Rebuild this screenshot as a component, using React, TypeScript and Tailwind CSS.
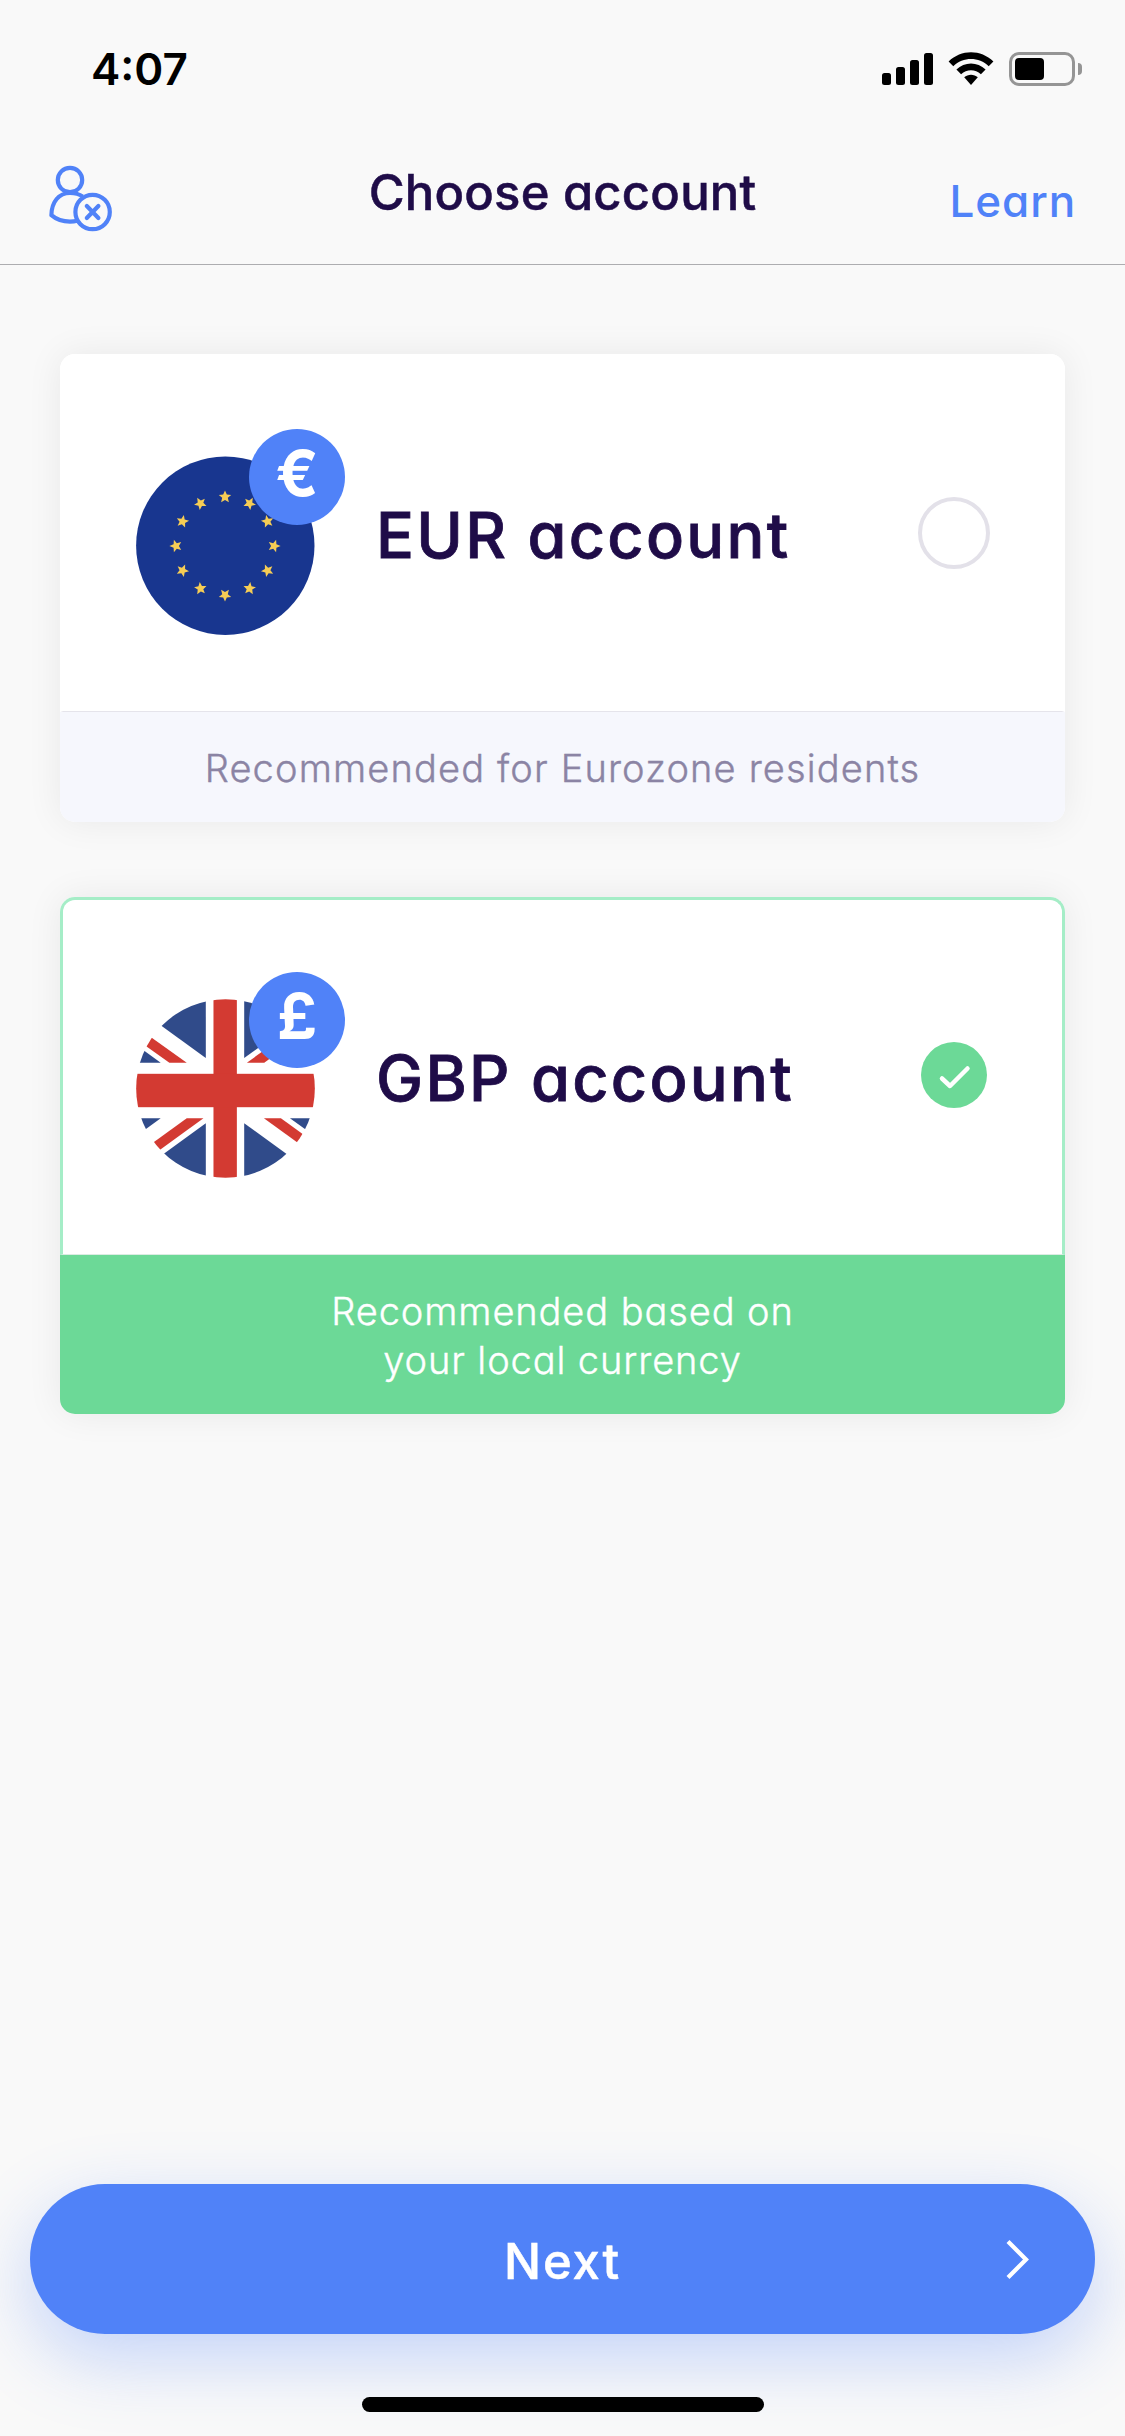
import { useState } from "react";

const STARS = Array.from({ length: 12 }, (_, i) => i * 30);

const accounts = [
  { id: "eur", symbol: "€", label: "EUR account", note: ["Recommended for Eurozone residents"] },
  { id: "gbp", symbol: "£", label: "GBP account", note: ["Recommended based on", "your local currency"] },
];

const EuFlag = () => (
  <svg className="w-[179px] h-[179px]" viewBox="0 0 179 179">
    <circle cx="89.3" cy="89.7" r="89.2" fill="#18368f" />
    {STARS.map((angle) => (
      <path
        key={angle}
        transform={`rotate(${angle} 89 90) translate(89 40.8)`}
        d="M0-6.4 1.8-2.2 6.2-1.9 2.8 1 3.9 5.4 0 3.1-3.9 5.4-2.8 1-6.2-1.9-1.8-2.2Z"
        fill="#f6cd55"
      />
    ))}
  </svg>
);

const UkFlag = () => (
  <svg className="w-[179px] h-[179px]" viewBox="0 0 536 536">
    <defs>
      <clipPath id="uk-round">
        <circle cx="268" cy="268" r="267.5" />
      </clipPath>
    </defs>
    <g clipPath="url(#uk-round)">
      <rect width="536" height="536" fill="#ffffff" />
      <g fill="#304b8a">
        <path d="M209 177 0 25V0H209Z" />
        <path d="M324 177 536 23V0H324Z" />
        <path d="M209 372 0 524V536H209Z" />
        <path d="M324 372 536 526V536H324Z" />
        <path d="M0 137 74 191H0Z" />
        <path d="M536 137 462 191H536Z" />
        <path d="M0 357H74L0 411Z" />
        <path d="M461 357H536V411Z" />
      </g>
      <g fill="#d33a32">
        <path d="M0 82 152 191H100L0 120Z" />
        <path d="M332 191H384L536 80V43Z" />
        <path d="M152 357H202L0 504V467Z" />
        <path d="M383 357H434L536 431V468Z" />
        <rect x="232" width="70" height="536" />
        <rect y="224" width="536" height="100" />
      </g>
    </g>
  </svg>
);

const StatusBar = () => (
  <div className="h-[138px] pl-[91px] pr-[43px] flex items-center justify-between text-black">
    <p className="text-[44px] leading-none font-semibold">4:07</p>
    <div className="flex items-center">
      <svg className="w-[51px] h-[34px]" viewBox="0 0 51 34">
        <rect x="0" y="21" width="9" height="12" rx="2.5" />
        <rect x="14" y="15" width="9" height="18" rx="2.5" />
        <rect x="28" y="8" width="9" height="25" rx="2.5" />
        <rect x="42" y="1" width="9" height="32" rx="2.5" />
      </svg>
      <svg className="w-[46px] h-[34px] ml-[15px]" viewBox="0 0 46 34">
        <path d="M0.6 9.6C13-2.8 33-2.8 45.4 9.6L40.7 14.3C31 4.6 15 4.6 5.3 14.3Z" />
        <path d="M8.4 17.4C16.5 9.4 29.5 9.4 37.6 17.4L32.9 22.2C27.4 16.8 18.6 16.8 13.1 22.2Z" />
        <path d="M16.2 25.3C20 21.9 26 21.9 29.8 25.3L23 33Z" />
      </svg>
      <div className="ml-[15px] w-[66px] h-[34px] rounded-[10px] border-3 border-[#959595] p-[3px]">
        <div className="w-[29px] h-[22px] rounded-[4px] bg-black" />
      </div>
      <div className="ml-[3px] w-[4px] h-[12px] rounded-r-full bg-[#959595]" />
    </div>
  </div>
);

const NavBar = () => (
  <div className="h-[127px] px-[48px] grid grid-cols-[1fr_auto_1fr] items-center border-b border-[#adadb0]">
    <button className="w-[68px] mb-1">
      <svg className="w-[68px] h-[70px]" viewBox="0 0 68 70" fill="none" stroke="#5082f8" strokeWidth="4.2">
        <circle cx="22" cy="16" r="12.2" />
        <path d="M34.6 32.4C31.2 30 27 29 22 29 11 29 3.6 37.6 3.4 51.2 8.5 55.6 15.5 57.7 22 57.7 24.5 57.7 27 57.4 29.3 56.8" strokeLinejoin="round" />
        <circle cx="44.6" cy="48" r="17.2" />
        <path d="M38.8 42 50.4 54M50.4 42 38.8 54" strokeLinecap="round" />
      </svg>
    </button>
    <h1 className="text-[49px] leading-none font-medium tracking-[0.2px] whitespace-nowrap text-[#1f0c48] mb-[18px] [-webkit-text-stroke:0.5px]">
      Choose account
    </h1>
    <button className="justify-self-end mr-px text-[44px] leading-none font-medium tracking-[0.9px] text-[#5082f8]">
      Learn
    </button>
  </div>
);

const AccountCard = ({ account, selected, onSelect }: any) => (
  <div
    className="w-full rounded-[15px] bg-white shadow-[0_0_36px_rgba(0,0,0,0.07)] cursor-pointer"
    onClick={onSelect}
  >
    <div
      className={`h-[358px] rounded-t-[15px] border-x-3 border-t-3 border-b pl-[73px] pr-[72px] pb-1 flex items-center
        ${selected ? "border-[#a5edc7] border-b-[#dcebe3]" : "border-white border-b-[#e5e4eb]"}
      `}
    >
      <div className="relative w-[209px] h-[206px] flex items-end">
        {account.id === "eur" ? <EuFlag /> : <UkFlag />}
        <span className="absolute top-0 right-0 w-[96px] h-[96px] rounded-full bg-[#5082f8] pb-[7px] flex items-center justify-center text-[63px] leading-none font-bold text-white">
          {account.symbol}
        </span>
      </div>
      <p className="ml-[31px] pt-[6px] flex-1 text-[63px] leading-none font-medium tracking-[2.3px] whitespace-nowrap text-[#1f0c48] [-webkit-text-stroke:0.8px]">
        {account.label}
      </p>
      {selected ? (
        <svg className="w-[66px] h-[66px] mr-[3px]" viewBox="0 0 66 66">
          <circle cx="33" cy="33" r="33" fill="#6cd997" />
          <path d="M21 36.5 29 44 46.5 26.5" fill="none" stroke="#ffffff" strokeWidth="4.5" strokeLinecap="round" strokeLinejoin="round" />
        </svg>
      ) : (
        <div className="w-[72px] h-[72px] mt-[2px] rounded-full border-4 border-[#e3e1e9]" />
      )}
    </div>
    <div
      className={`rounded-b-[15px] pt-[2px] flex flex-col items-center justify-center text-[38px] leading-[49px] font-light [-webkit-text-stroke:0.4px]
        ${selected ? "h-[159px] bg-[#6cd997] text-white tracking-[0.9px]" : "h-[110px] bg-[#f6f7fd] text-[#8b84a4] tracking-[1.15px]"}
      `}
    >
      {account.note.map((line: string) => (
        <p key={line} className="whitespace-nowrap">{line}</p>
      ))}
    </div>
  </div>
);

const App = () => {
  const [selected, setSelected] = useState("gbp");

  return (
    <div className="w-[1125px] h-[2436px] overflow-hidden bg-[#f9f9f9] flex flex-col font-['Inter','Liberation_Sans',sans-serif] [font-feature-settings:'cv11']">
      <StatusBar />
      <NavBar />

      {/* Accounts */}
      <div className="px-[60px] pt-[89px] flex-1 flex flex-col gap-[75px]">
        {accounts.map((account) => (
          <AccountCard
            key={account.id}
            account={account}
            selected={selected === account.id}
            onSelect={() => setSelected(account.id)}
          />
        ))}
      </div>

      {/* Footer */}
      <div className="px-[30px] pb-[24px] flex flex-col items-center">
        <button className="w-full h-[150px] px-[65px] rounded-full bg-[#5082f8] shadow-[0_24px_72px_rgba(80,130,248,0.32)] grid grid-cols-3 items-center text-white">
          <span className="col-start-2 pt-[4px] text-[49px] leading-none font-medium tracking-[1.8px] [-webkit-text-stroke:0.5px]">Next</span>
          <svg className="justify-self-end w-[24px] h-[40px]" viewBox="0 0 24 40" fill="none" stroke="currentColor" strokeWidth="4.2">
            <path d="M2 2.5 20 20.5 2 38.5" />
          </svg>
        </button>
        <div className="mt-[63px] w-[402px] h-[15px] rounded-full bg-black" />
      </div>
    </div>
  );
};

export default App;
